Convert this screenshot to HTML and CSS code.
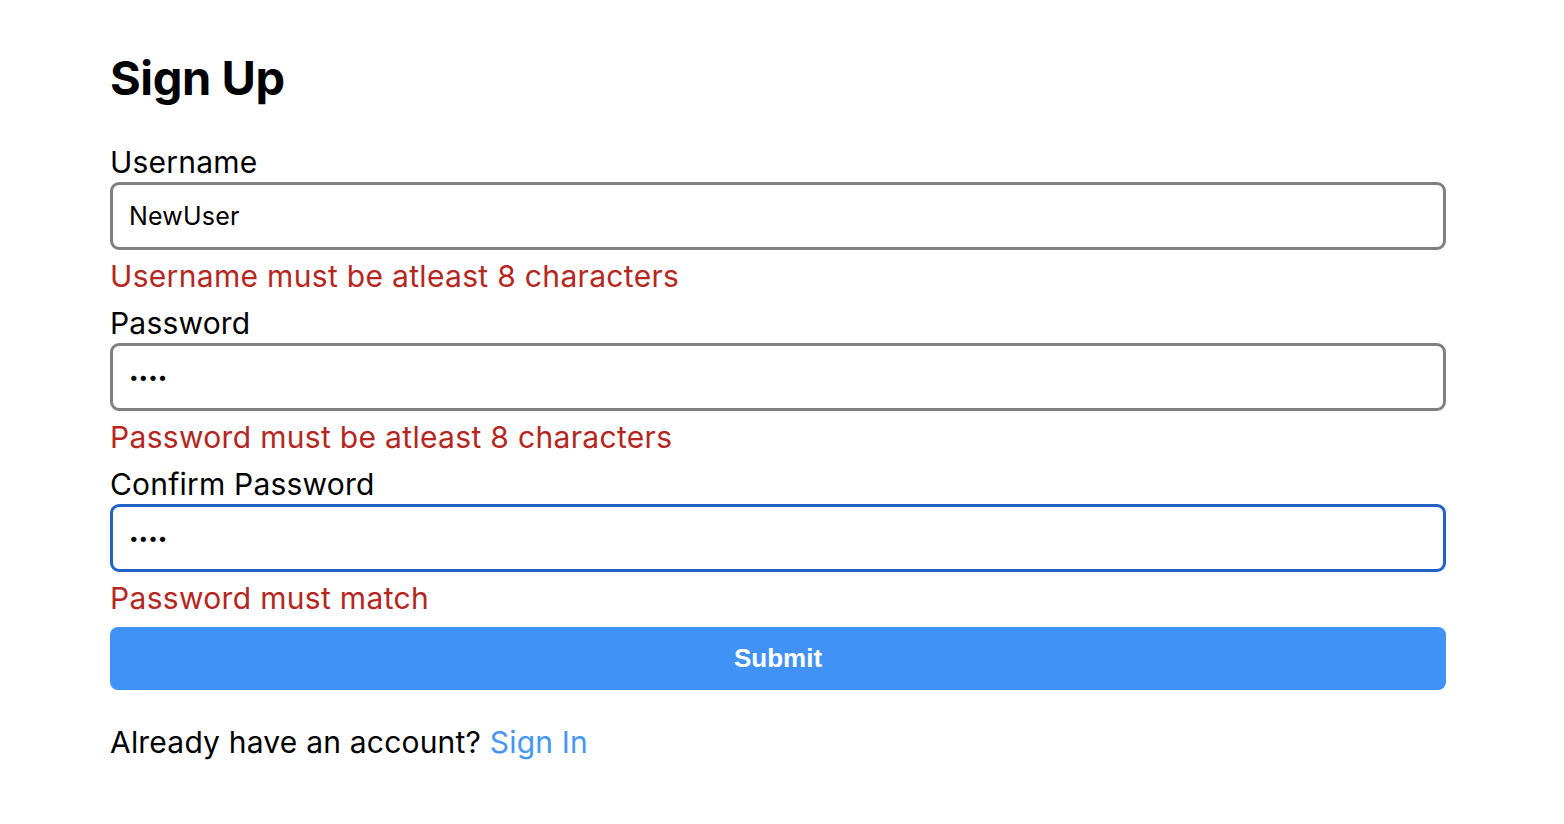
FILE: index.html
```html
<!DOCTYPE html>
<html lang="en">
<head>
<meta charset="utf-8">
<title>Sign Up</title>
<link rel="stylesheet" href="styles.css">
</head>
<body>
<main class="page">
  <h1 class="title">Sign Up</h1>
  <form class="form">
    <div class="field">
      <label class="label" for="username">Username</label>
      <input class="input" id="username" type="text" value="NewUser">
      <div class="error">Username must be atleast 8 characters</div>
    </div>
    <div class="field">
      <label class="label" for="password">Password</label>
      <input class="input" id="password" type="password" value="1234">
      <div class="error">Password must be atleast 8 characters</div>
    </div>
    <div class="field">
      <label class="label" for="confirm">Confirm Password</label>
      <input class="input input-focused" id="confirm" type="password" value="1234">
      <div class="error">Password must match</div>
    </div>
    <button class="submit" type="button">Submit</button>
  </form>
  <p class="switch">Already have an account? <a class="link" href="#">Sign In</a></p>
</main>
</body>
</html>
```
FILE: styles.css
```css
html, body {
  margin: 0;
  padding: 0;
  background: #ffffff;
}
body {
  font-family: Inter, "Noto Sans", "Liberation Sans", sans-serif;
  color: #000;
}
.page {
  width: 1336px;
  padding: 44px 0 0 110px;
}
.title {
  margin: 0 0 32px 0;
  font-size: 47px;
  font-weight: 700;
  line-height: 68px;
  letter-spacing: -0.4px;
}
.form {
  display: flex;
  flex-direction: column;
}
.field {
  display: flex;
  flex-direction: column;
}
.label {
  margin-bottom: 2px;
  font-size: 30px;
  line-height: 36px;
  letter-spacing: 0.2px;
}
.input {
  box-sizing: border-box;
  height: 68px;
  width: 100%;
  margin: 0;
  padding: 0 16px;
  border: 3px solid #808080;
  border-radius: 9px;
  font-family: Inter, "Noto Sans", sans-serif;
  font-size: 25px;
  letter-spacing: 0.2px;
  color: #000;
  background: #fff;
  outline: none;
}
.input[type="password"] {
  font-size: 17px;
  letter-spacing: 0;
}
.input-focused {
  border-color: #2262c8;
}
.error {
  margin-top: 8px;
  margin-bottom: 11px;
  font-size: 30px;
  line-height: 36px;
  color: #b5271e;
  letter-spacing: 0.32px;
}
.submit {
  margin-top: 0;
  height: 63px;
  width: 100%;
  border: none;
  border-radius: 8px;
  background: #4192f7;
  color: #fff;
  font-family: "Liberation Sans", Arial, sans-serif;
  font-weight: 700;
  font-size: 26px;
}
.switch {
  margin: 34px 0 0 0;
  font-size: 30px;
  line-height: 36px;
  letter-spacing: 0.2px;
}
.link {
  color: #4596f5;
  text-decoration: none;
}
```
